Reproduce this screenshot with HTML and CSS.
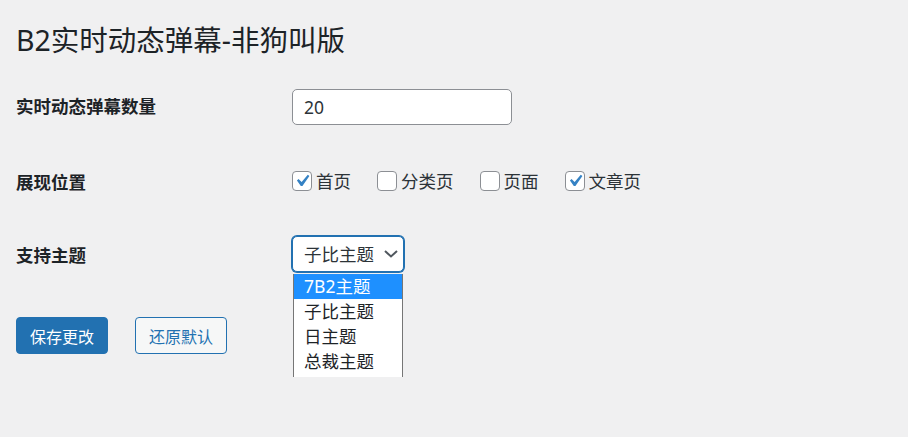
FILE: index.html
```html
<!DOCTYPE html>
<html lang="zh-CN">
<head>
    <meta charset="UTF-8">
    <title>B2实时动态弹幕-非狗叫版</title>
    <link rel="stylesheet" href="styles.css">
</head>
<body>
    <div class="wrap">
        <h1>B2实时动态弹幕-非狗叫版</h1>

        <div class="form-row row-count">
            <div class="th">实时动态弹幕数量</div>
            <div class="td">
                <input type="text" class="text-input" value="20">
            </div>
        </div>

        <div class="form-row row-pos">
            <div class="th">展现位置</div>
            <div class="td checks">
                <label class="check-item">
                    <span class="box"><svg viewBox="0 0 20 20"><path d="M14.83 4.89l1.34.94-5.81 8.38H9.02L5.78 9.67l1.34-1.25 2.57 2.4z"/></svg></span>
                    首页
                </label>
                <label class="check-item">
                    <span class="box"></span>
                    分类页
                </label>
                <label class="check-item">
                    <span class="box"></span>
                    页面
                </label>
                <label class="check-item">
                    <span class="box"><svg viewBox="0 0 20 20"><path d="M14.83 4.89l1.34.94-5.81 8.38H9.02L5.78 9.67l1.34-1.25 2.57 2.4z"/></svg></span>
                    文章页
                </label>
            </div>
        </div>

        <div class="form-row row-theme">
            <div class="th">支持主题</div>
            <div class="td">
                <div class="select">
                    <span>子比主题</span>
                    <svg class="chevron" viewBox="0 0 14 8"><polyline points="1,1 7,6.5 13,1"/></svg>
                    <ul class="select-list">
                        <li class="active">7B2主题</li>
                        <li>子比主题</li>
                        <li>日主题</li>
                        <li>总裁主题</li>
                    </ul>
                </div>
            </div>
        </div>

        <div class="submit">
            <button class="button button-primary">保存更改</button>
            <button class="button button-secondary">还原默认</button>
        </div>
    </div>
</body>
</html>
```

FILE: styles.css
```css
html, body {
    min-height: 100%;
}

body {
    margin: 0;
    min-height: 437px;
    background-color: #f0f0f1;
    color: #1d2327;
    font-family: "Noto Sans", "Noto Sans CJK SC", sans-serif;
}

.wrap {
    padding: 0 16px 60px;
}

h1 {
    margin: 0 0 11px;
    padding-top: 21px;
    font-size: 28.5px;
    font-weight: 400;
    line-height: 38px;
    color: #1d2327;
}

.form-row {
    display: grid;
    grid-template-columns: 276px auto;
}

.th {
    font-size: 17.5px;
    font-weight: 700;
    line-height: 23px;
}

.row-count .th {
    padding-top: 25px;
}

.row-count .td {
    padding: 19px 0;
}

.text-input {
    display: block;
    box-sizing: border-box;
    width: 220px;
    height: 36px;
    margin: 0;
    padding: 0 11px;
    border: 1px solid #8c8f94;
    border-radius: 5px;
    background: #fff;
    color: #2c3338;
    font-family: "Noto Sans", "Noto Sans CJK SC", sans-serif;
    font-size: 17.5px;
}

.row-pos .th {
    padding-top: 27px;
}

.row-pos .td {
    padding: 26px 0 25px;
}

.checks {
    display: flex;
}

.check-item {
    display: flex;
    align-items: center;
    gap: 4px;
    margin-right: 26px;
    font-size: 17.5px;
    line-height: 22px;
    color: #2c3338;
}

.box {
    box-sizing: border-box;
    width: 20px;
    height: 20px;
    border: 1px solid #8c8f94;
    border-radius: 4px;
    background: #fff;
    position: relative;
}

.box svg {
    position: absolute;
    left: -3px;
    top: -3px;
    width: 24px;
    height: 24px;
    fill: #3582c4;
}

.row-theme .th {
    padding-top: 27px;
}

.row-theme .td {
    padding: 19px 0;
}

.select {
    position: relative;
    box-sizing: border-box;
    width: 112px;
    height: 36px;
    padding: 0 0 0 11px;
    border: 1px solid #2271b1;
    border-radius: 5px;
    box-shadow: 0 0 0 1px #2271b1;
    background: #fff;
    color: #2c3338;
    font-size: 17.5px;
    line-height: 34px;
    display: flex;
    align-items: center;
}

.chevron {
    width: 14px;
    height: 8px;
    margin-left: 10px;
    fill: none;
    stroke: #50575e;
    stroke-width: 2;
}

.select-list {
    position: absolute;
    z-index: 5;
    top: 37px;
    left: 0;
    width: 110px;
    height: 103px;
    box-sizing: border-box;
    margin: 0;
    padding: 0;
    list-style: none;
    background: #fff;
    border-left: 1px solid #767676;
    border-right: 1px solid #767676;
}

.select-list li {
    height: 25px;
    padding-left: 10px;
    line-height: 25px;
    font-size: 17.5px;
    color: #1d2327;
}

.select-list li.active {
    background: #1e90ff;
    color: #fff;
}

.submit {
    display: flex;
    gap: 27px;
    padding-top: 26px;
}

.button {
    box-sizing: border-box;
    width: 92px;
    height: 37px;
    border-radius: 4px;
    font-family: "Noto Sans", "Noto Sans CJK SC", sans-serif;
    font-size: 16px;
    cursor: pointer;
}

.button-primary {
    background: #2271b1;
    border: 1px solid #2271b1;
    color: #fff;
}

.button-secondary {
    background: #f6f7f7;
    border: 1px solid #2271b1;
    color: #2271b1;
}
```
